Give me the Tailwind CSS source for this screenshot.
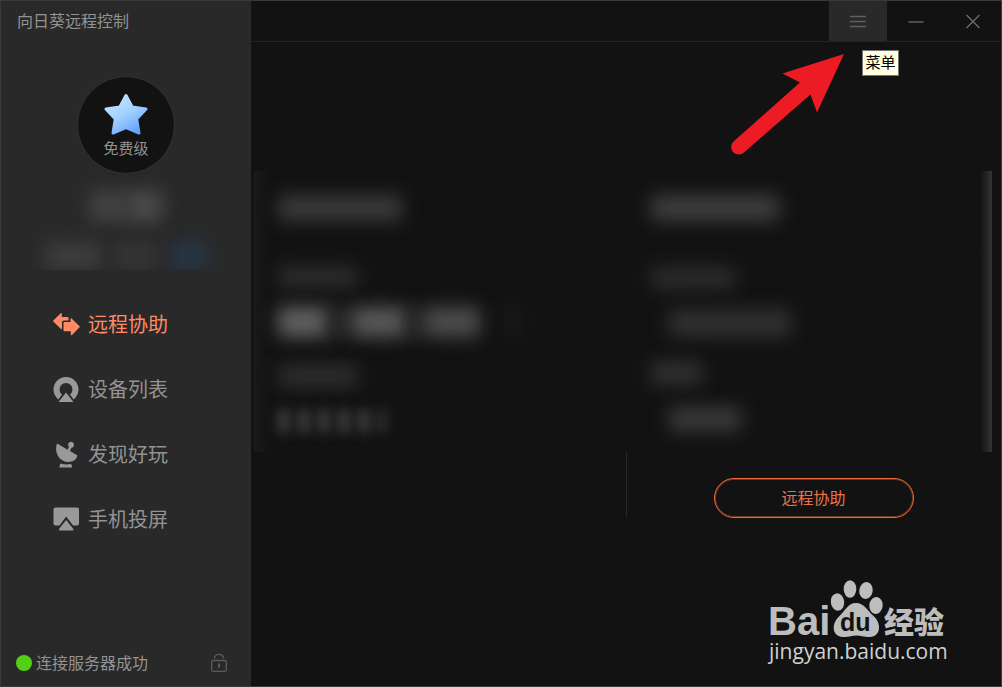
<!DOCTYPE html>
<html lang="zh-CN">
  <head>
    <meta charset="UTF-8" />
    <meta name="viewport" content="width=device-width, initial-scale=1" />
    <title>向日葵远程控制</title>
    <script src="https://cdn.jsdelivr.net/npm/@tailwindcss/browser@4"></script>
  </head>
  <body class="min-h-screen flex border border-[#3a3a3a] bg-[#121212] text-[#939393] font-['Liberation_Sans','Noto_Sans_CJK_SC',sans-serif]">
    <!-- Sidebar -->
    <aside class="w-[250px] shrink-0 flex flex-col bg-[#292929]">
      <h1 class="h-[42px] px-4 flex items-center text-base">向日葵远程控制</h1>

      <div class="mt-[33px] mx-auto w-[98px] h-[98px] rounded-full bg-[#121212] border border-[#333] flex flex-col items-center pt-4">
        <svg class="w-11 h-[42px]" viewBox="0 0 44 42" aria-hidden="true">
          <defs>
            <linearGradient id="star" x1="0.2" y1="0" x2="0.8" y2="1">
              <stop offset="0" stop-color="#c4e6ff" />
              <stop offset="0.5" stop-color="#a0d0ff" />
              <stop offset="1" stop-color="#5f9fff" />
            </linearGradient>
          </defs>
          <path d="M22 2.5 L28.2 14 L42 16 L32.7 26 L35 40 L22 34.5 L9 40 L11.3 26 L2 16 L15.8 14 Z" fill="url(#star)" stroke="url(#star)" stroke-width="3" stroke-linejoin="round" />
        </svg>
        <span class="text-[15px] leading-7">免费级</span>
      </div>

      <!-- Account, hidden -->
      <div class="h-24 px-11 flex flex-col overflow-hidden" aria-hidden="true">
        <div class="mt-4 flex justify-center">
          <div class="w-9 h-8 bg-[#434343] blur-[9px]"></div>
          <div class="w-9 h-8 bg-[#4a4a4a] blur-[9px]"></div>
        </div>
        <div class="mt-5 flex justify-between">
          <div class="w-14 h-7 bg-[#3d3d3d] blur-[9px]"></div>
          <div class="w-11 h-7 bg-[#353535] blur-[9px]"></div>
          <div class="w-9 h-7 bg-[#263746] blur-[9px]"></div>
        </div>
      </div>

      <nav class="mt-[21px] flex flex-col text-xl">
        <a href="#assist" class="h-[65px] pl-[51px] flex items-center gap-2 text-[#ff8a65]">
          <svg class="w-7 h-7" viewBox="0 0 28 28" fill="currentColor" aria-hidden="true">
            <path d="M0.800 11 L9 3 Q9.800 2.600 9.800 3.500 V7 H15.500 Q16.500 7 16.500 8 V10.500 H12 Q10 10.500 10 12.500 V18.500 Q9.800 19.600 9 19 Z" />
            <path d="M11.500 13 Q11.500 12 12.500 12 H18.500 V8.800 Q18.700 7.800 19.600 8.400 L28 16.800 L20 25 Q19 25.600 18.800 24.600 V21.200 H12.500 Q11.500 21.200 11.500 20.200 Z" />
          </svg>
          <span class="pt-0.5">远程协助</span>
        </a>
        <a href="#devices" class="h-[65px] pl-[51px] flex items-center gap-2">
          <svg class="w-7 h-7" viewBox="0 0 28 28" aria-hidden="true">
            <path d="M8.200 22 A9.500 9.500 0 1 1 19.800 22" fill="none" stroke="#999" stroke-width="6" />
            <path d="M14 15 L23 28 H5 Z" fill="#292929" />
            <path d="M14 17.500 L21.500 27 H6.500 Z" fill="#999" />
          </svg>
          <span class="pt-0.5">设备列表</span>
        </a>
        <a href="#discover" class="h-[65px] pl-[51px] flex items-center gap-2">
          <svg class="w-7 h-7" viewBox="0 0 28 28" fill="#999" aria-hidden="true">
            <path d="M6 4 L15.500 9.700 L17 7 A3 3 0 1 1 19.400 7.800 L18 11 L25.500 15.500 Q24 21.500 16.500 22 C8 22 2.500 14 4.500 5 Q4.900 3.400 6 4 Z" />
            <path d="M9 23.500 Q13.500 25 18.500 24 Q20 24.200 20 27.500 H7.500 Q7.500 24 9 23.500 Z" />
          </svg>
          <span class="pt-0.5">发现好玩</span>
        </a>
        <a href="#cast" class="h-[65px] pl-[51px] flex items-center gap-2">
          <svg class="w-7 h-7" viewBox="0 0 28 28" aria-hidden="true">
            <rect x="1.500" y="2.500" width="25.500" height="18" rx="2" fill="#999" />
            <path d="M14.200 11.500 L24 24.500 H4.500 Z" fill="#292929" />
            <path d="M14.200 15 L21.400 24 Q21.600 25.500 20.700 25.500 H7.700 Q6.800 25.500 7 24 Z" fill="#999" />
          </svg>
          <span class="pt-0.5">手机投屏</span>
        </a>
      </nav>

      <footer class="mt-auto h-[46px] pl-[15px] pr-6 flex items-center gap-1">
        <span class="w-4 h-4 rounded-full bg-[#52d017]"></span>
        <span class="pt-0.5 text-base">连接服务器成功</span>
        <button type="button" class="ml-auto" aria-label="锁定">
          <svg class="w-4 h-[18px] block" viewBox="0 0 16 18" fill="none" stroke="#5c5c5c" aria-hidden="true">
            <rect x="0.700" y="6.500" width="14.600" height="10.800" rx="1.500" stroke-width="1.300" />
            <path d="M3.500 4.500 A4.500 4.200 0 0 1 12.500 4.500" stroke-width="1.300" />
            <path d="M8 9.500 V13.500" stroke-width="2" />
          </svg>
        </button>
      </footer>
    </aside>

    <!-- Main panel -->
    <main class="relative flex-1 min-w-0 flex flex-col">
      <header class="h-[41px] border-b border-[#242424] flex justify-end">
        <button type="button" class="w-[58px] flex items-center justify-center bg-[#292929]" aria-label="菜单" aria-describedby="menu-tip">
          <svg class="w-4 h-4" viewBox="0 0 16 16" stroke="#606060" stroke-width="1.500" aria-hidden="true">
            <path d="M0 3.500 H16 M0 8.500 H16 M0 13.500 H16" />
          </svg>
        </button>
        <button type="button" class="w-[57px] flex items-center justify-center" aria-label="最小化">
          <svg class="w-4 h-4" viewBox="0 0 16 16" stroke="#606060" stroke-width="1.500" aria-hidden="true">
            <path d="M0.500 9 H15.500" />
          </svg>
        </button>
        <button type="button" class="w-[57px] flex items-center justify-center" aria-label="关闭">
          <svg class="w-4 h-4" viewBox="0 0 16 16" stroke="#707070" stroke-width="1.200" aria-hidden="true">
            <path d="M1.500 2 L14.500 15 M14.500 2 L1.500 15" />
          </svg>
        </button>
      </header>

      <!-- Connection details, hidden -->
      <section class="mt-[129px] ml-[3px] mr-[9px] h-[281px] flex overflow-hidden" aria-hidden="true">
        <div class="w-4 bg-linear-to-r from-[#1a1a1a] to-[#121212]"></div>
        <div class="flex-1 pl-2 pt-6 flex flex-col">
          <div class="w-[124px] h-[26px] bg-[#393939] blur-[9px]"></div>
          <div class="mt-[46px] w-20 h-5 bg-[#2e2e2e] blur-[9px]"></div>
          <div class="mt-5 flex">
            <div class="w-[52px] h-[30px] bg-[#606060] blur-[9px]"></div>
            <div class="w-[22px] h-[30px] bg-[#2a2a2a] blur-[9px]"></div>
            <div class="w-[56px] h-[30px] bg-[#585858] blur-[9px]"></div>
            <div class="w-[16px] h-[30px] bg-[#2a2a2a] blur-[9px]"></div>
            <div class="w-[56px] h-[30px] bg-[#4c4c4c] blur-[9px]"></div>
            <div class="ml-6 w-4 h-[30px] bg-[#1b1b1b] blur-[9px]"></div>
          </div>
          <div class="mt-7 w-20 h-[22px] bg-[#2e2e2e] blur-[9px]"></div>
          <div class="mt-[22px] flex gap-2">
            <div class="w-3 h-6 bg-[#3e3e3e] blur-[6px]"></div>
            <div class="w-3 h-6 bg-[#3e3e3e] blur-[6px]"></div>
            <div class="w-3 h-6 bg-[#3e3e3e] blur-[6px]"></div>
            <div class="w-3 h-6 bg-[#3e3e3e] blur-[6px]"></div>
            <div class="w-3 h-6 bg-[#3e3e3e] blur-[6px]"></div>
            <div class="w-2 h-6 bg-[#363636] blur-[6px]"></div>
          </div>
        </div>
        <div class="flex-1 pl-11 pt-6 flex flex-col">
          <div class="w-[128px] h-[26px] bg-[#3e3e3e] blur-[9px]"></div>
          <div class="mt-[46px] w-[84px] h-[22px] bg-[#2c2c2c] blur-[9px]"></div>
          <div class="mt-5 ml-[18px] w-[122px] h-7 bg-[#303030] blur-[9px]"></div>
          <div class="mt-6 w-[52px] h-6 bg-[#303030] blur-[9px]"></div>
          <div class="mt-[22px] ml-[18px] w-[72px] h-6 bg-[#3a3a3a] blur-[9px]"></div>
        </div>
        <div class="w-3 bg-linear-to-r from-[#121212] to-[#343434]"></div>
      </section>

      <div class="grid grid-cols-2">
        <div></div>
        <div class="relative pt-[26px] flex justify-center">
          <div class="absolute left-0 top-0 w-px h-[65px] bg-[#292929]"></div>
          <button type="button" class="w-[200px] h-10 rounded-full border border-[#f06a3a] shadow-[inset_0_0_0_1px_#70351f] pt-0.5 text-base text-[#e8734a]">远程协助</button>
        </div>
      </div>

      <!-- Tooltip and pointer over the panel -->
      <div id="menu-tip" role="tooltip" class="absolute right-[102px] top-[49px] w-[37px] h-[26px] border border-[#767676] bg-[#ffffe1] text-[15px] text-black flex items-center justify-center whitespace-nowrap">菜单</div>
      <svg class="absolute right-[156px] top-[52px] w-[115px] h-[103px]" viewBox="730 53 115 103" aria-hidden="true">
        <path d="M844 54 L782.500 73.500 L800 82.500 L733.500 141.500 A7.600 7.600 0 0 0 744 152.500 L810.500 94.500 L817 112.500 Z" fill="#ed1c24" />
      </svg>

      <svg class="absolute right-[41px] bottom-4 w-[194px] h-[94px]" viewBox="766 576 194 94" fill="#bdbdbd" role="img" aria-label="Baidu 经验 jingyan.baidu.com">
        <text x="768" y="635" font-size="40" font-weight="700" font-family="Liberation Sans, sans-serif">Bai</text>
        <ellipse cx="837.500" cy="602" rx="6.700" ry="8.700" transform="rotate(-8 837.500 602)" />
        <ellipse cx="850" cy="589" rx="6.300" ry="8.800" />
        <ellipse cx="866" cy="590.500" rx="6.700" ry="8.500" transform="rotate(10 866 590.500)" />
        <ellipse cx="876" cy="605.500" rx="6.700" ry="8.500" transform="rotate(6 876 605.500)" />
        <path d="M856 603 C864 603 867 610 873 615.500 C882 623 881 636.500 870 637 C864 637.300 861 635.500 856.500 635.500 C852 635.500 849 637.300 843 637 C832 636.500 831 624 839 616.500 C845 611 848 603 856 603 Z" />
        <text x="840" y="631" font-size="25" font-weight="700" font-family="Liberation Sans, sans-serif" fill="#121212">du</text>
        <text x="884" y="633" font-size="30" font-weight="900" font-family="Noto Sans CJK SC, sans-serif">经验</text>
        <text x="769" y="659" font-size="21" font-family="Open Sans, sans-serif" fill="#d0d0d0">jingyan.baidu.com</text>
      </svg>
    </main>
  </body>
</html>
